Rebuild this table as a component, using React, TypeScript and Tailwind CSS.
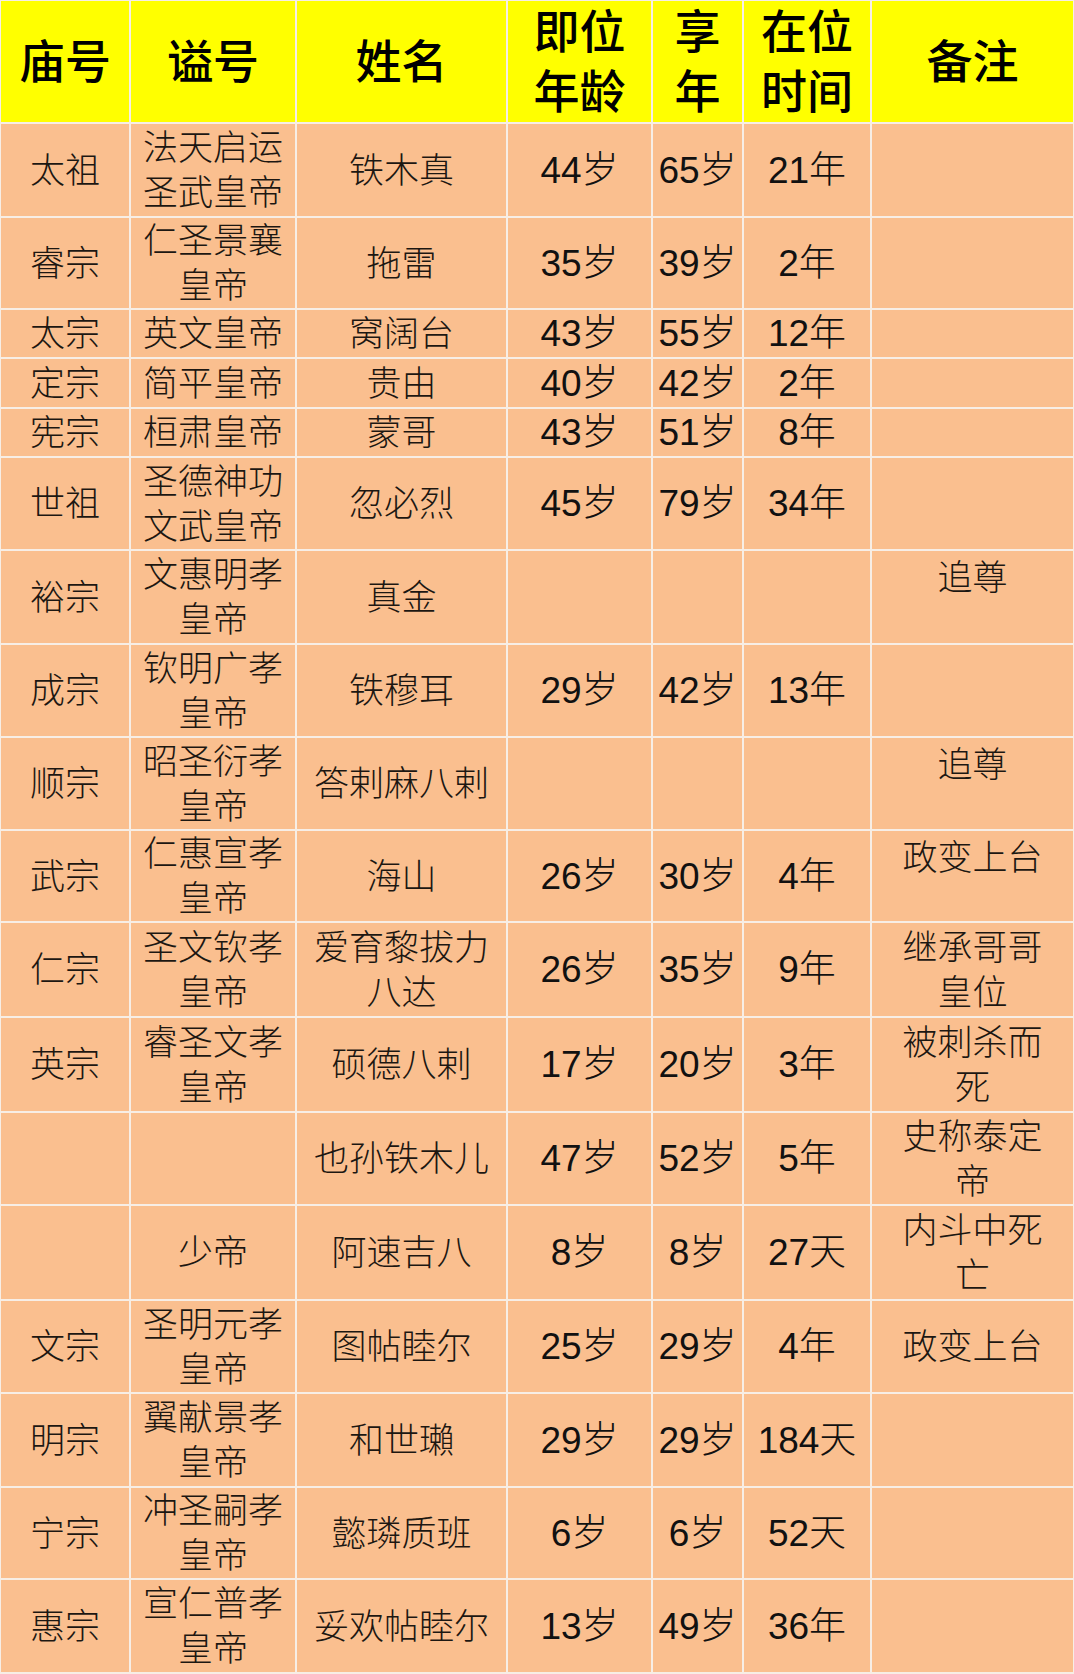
import React from "react";

type Row = {
  h: number;
  miao: string;
  shi: string;
  name: string;
  age: string;
  life: string;
  reign: string;
  note?: string;
  noteTop?: boolean; // 备注贴顶
};

/* ======================== DATA ======================== */
const ROWS: Row[] = [
  { h: 94, miao: "太祖", shi: "法天启运\n圣武皇帝", name: "铁木真", age: "44", life: "65", reign: "21年" },
  { h: 92, miao: "睿宗", shi: "仁圣景襄\n皇帝", name: "拖雷", age: "35", life: "39", reign: "2年" },
  { h: 49, miao: "太宗", shi: "英文皇帝", name: "窝阔台", age: "43", life: "55", reign: "12年" },
  { h: 50, miao: "定宗", shi: "简平皇帝", name: "贵由", age: "40", life: "42", reign: "2年" },
  { h: 49, miao: "宪宗", shi: "桓肃皇帝", name: "蒙哥", age: "43", life: "51", reign: "8年" },
  { h: 93, miao: "世祖", shi: "圣德神功\n文武皇帝", name: "忽必烈", age: "45", life: "79", reign: "34年" },
  { h: 94, miao: "裕宗", shi: "文惠明孝\n皇帝", name: "真金", age: "", life: "", reign: "", note: "追尊", noteTop: true },
  { h: 93, miao: "成宗", shi: "钦明广孝\n皇帝", name: "铁穆耳", age: "29", life: "42", reign: "13年" },
  { h: 93, miao: "顺宗", shi: "昭圣衍孝\n皇帝", name: "答剌麻八剌", age: "", life: "", reign: "", note: "追尊", noteTop: true },
  { h: 92, miao: "武宗", shi: "仁惠宣孝\n皇帝", name: "海山", age: "26", life: "30", reign: "4年", note: "政变上台", noteTop: true },
  { h: 95, miao: "仁宗", shi: "圣文钦孝\n皇帝", name: "爱育黎拔力\n八达", age: "26", life: "35", reign: "9年", note: "继承哥哥\n皇位" },
  { h: 95, miao: "英宗", shi: "睿圣文孝\n皇帝", name: "硕德八剌", age: "17", life: "20", reign: "3年", note: "被刺杀而\n死" },
  { h: 93, miao: "", shi: "", name: "也孙铁木儿", age: "47", life: "52", reign: "5年", note: "史称泰定\n帝" },
  { h: 95, miao: "", shi: "少帝", name: "阿速吉八", age: "8", life: "8", reign: "27天", note: "内斗中死\n亡" },
  { h: 93, miao: "文宗", shi: "圣明元孝\n皇帝", name: "图帖睦尔", age: "25", life: "29", reign: "4年", note: "政变上台" },
  { h: 94, miao: "明宗", shi: "翼献景孝\n皇帝", name: "和世瓎", age: "29", life: "29", reign: "184天" },
  { h: 92, miao: "宁宗", shi: "冲圣嗣孝\n皇帝", name: "懿璘质班", age: "6", life: "6", reign: "52天" },
  { h: 94, miao: "惠宗", shi: "宣仁普孝\n皇帝", name: "妥欢帖睦尔", age: "13", life: "49", reign: "36年" },
];

const HEADERS = ["庙号", "谥号", "姓名", "即位\n年龄", "享\n年", "在位\n时间", "备注"];
const WIDTHS = [130, 166, 211, 145, 91, 128, 203];

/* ======================== UI ======================== */
const cell =
  "border-2 border-[#f7eee6] bg-[#fabf8f] p-0 text-center whitespace-pre text-[35px] leading-[45px] font-light text-[#1c1712]";
// 数字列：阿拉伯数字略大
const num = `${cell} text-[#111] text-[37px]`;

function withSui(v: string) {
  return v ? `${v}岁` : "";
}

export default function App() {
  return (
    <div
      className="w-[1074px] h-[1674px] overflow-hidden bg-[#fabf8f]"
      style={{ fontFamily: '"Liberation Sans", "Noto Sans CJK SC", sans-serif' }}
    >
      <table className="w-[1076px] table-fixed border-collapse -mt-px -ml-px">
        <colgroup>
          {WIDTHS.map((w, i) => (
            <col key={i} style={{ width: w }} />
          ))}
        </colgroup>
        <thead>
          <tr className="h-[123px]">
            {HEADERS.map((t) => (
              <th
                key={t}
                className="border-2 border-[#f7eee6] bg-[#ffff00] p-0 text-center whitespace-pre text-[46px] leading-[60px] font-medium text-black"
              >
                {t}
              </th>
            ))}
          </tr>
        </thead>
        <tbody>
          {ROWS.map((r, i) => (
            <tr key={i} style={{ height: r.h }}>
              <td className={cell}>{r.miao}</td>
              <td className={cell}>{r.shi}</td>
              <td className={cell}>{r.name}</td>
              <td className={num}>{withSui(r.age)}</td>
              <td className={num}>{withSui(r.life)}</td>
              <td className={num}>{r.reign}</td>
              <td className={`${cell} ${r.noteTop ? "align-top pt-[4px]" : ""}`}>{r.note ?? ""}</td>
            </tr>
          ))}
        </tbody>
      </table>
    </div>
  );
}
